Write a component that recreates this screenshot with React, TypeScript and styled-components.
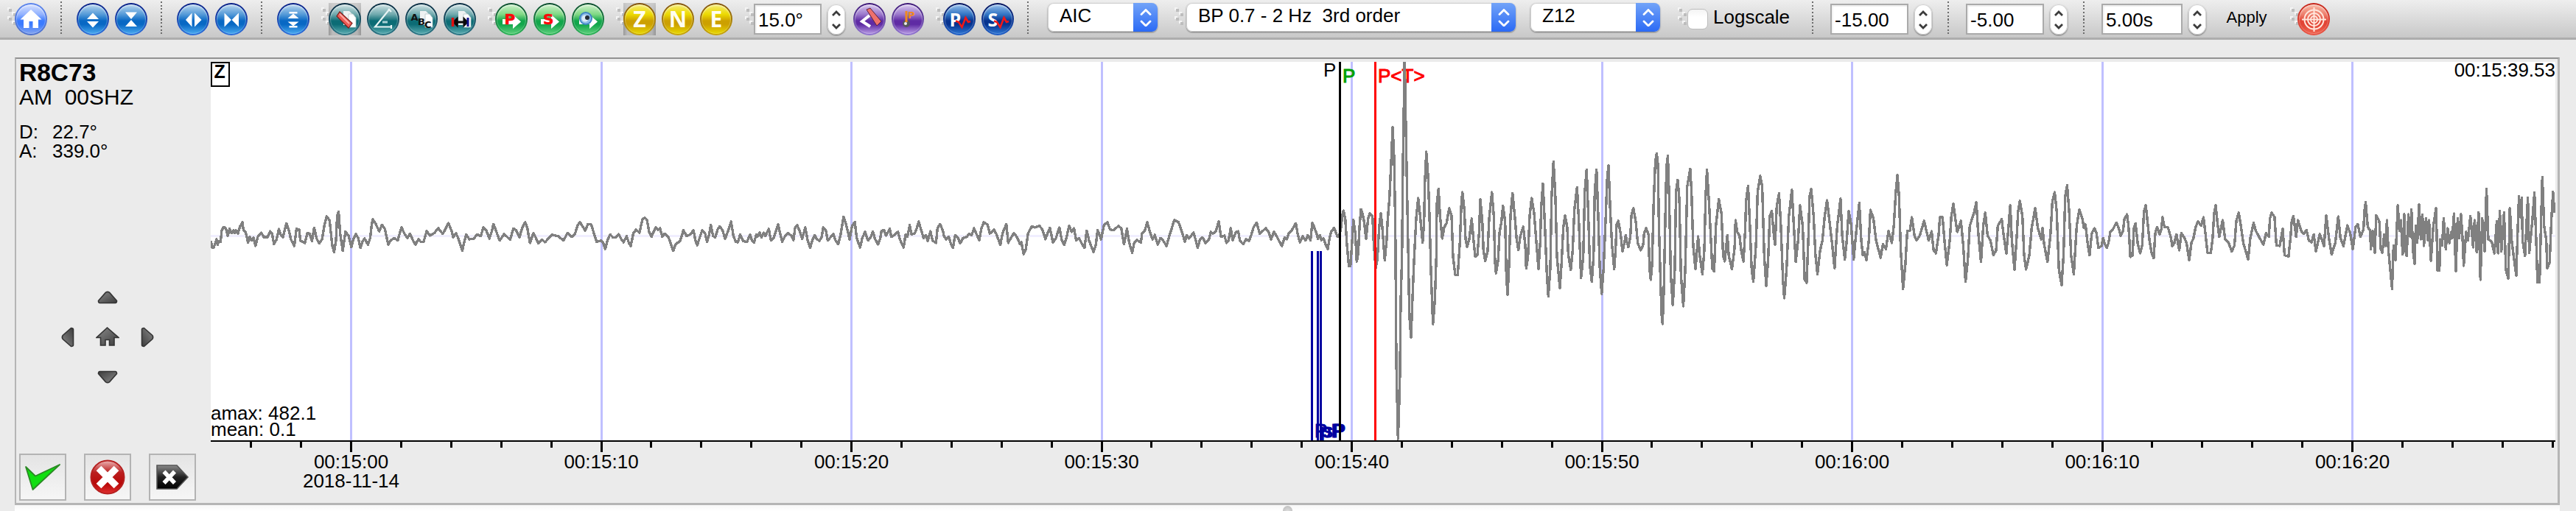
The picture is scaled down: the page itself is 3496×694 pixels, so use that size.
import React from 'react';
import styled, { createGlobalStyle, css } from 'styled-components';

const GlobalStyle = createGlobalStyle`
  * { box-sizing: border-box; }
  html, body { margin: 0; padding: 0; }
  body {
    width: 3496px;
    height: 694px;
    overflow: hidden;
    background: #ebebeb;
    color: #000;
    font-family: "Liberation Sans", Arial, Helvetica, sans-serif;
    font-size: 26px;
  }
`;

/* ---------- window and toolbar ---------- */

const Window = styled.div`
  display: flex;
  flex-direction: column;
  width: 3496px;
  height: 694px;
`;

const Toolbar = styled.header`
  display: flex;
  align-items: flex-start;
  height: 54px;
  padding-left: 10px;
  background: linear-gradient(#eeeeee, #c8c8c8);
  border-bottom: 3px solid #adadad;
`;

const ToolGroup = styled.div<{ $before?: number; $gap?: number }>`
  display: flex;
  align-items: flex-start;
  flex: none;
  gap: ${(p) => p.$gap ?? 8}px;
  margin-left: ${(p) => p.$before ?? 0}px;
`;

const Separator = styled.i<{ $before: number; $after: number }>`
  flex: none;
  width: 2px;
  height: 44px;
  margin: 2px ${(p) => p.$after}px 0 ${(p) => p.$before}px;
  background: repeating-linear-gradient(#6c6c6c 0 2px, transparent 2px 4.7px);
`;

const GripMark = styled.svg<{ $before?: number; $after?: number }>`
  flex: none;
  width: 10px;
  height: 24px;
  margin: 10px ${(p) => p.$after ?? 0}px 0 ${(p) => p.$before ?? 0}px;
  overflow: visible;
`;

const Grip = ({ before, after }: { before?: number; after?: number }) => (
  <GripMark $before={before} $after={after} viewBox="0 0 10 24">
    {[0, 6, 12, 18].map((y, i) => (
      <g key={y} transform={`translate(${i % 2 ? 6 : 0} ${y})`}>
        <rect width="4" height="4" fill="#f4f4f4" />
        <rect x="2" y="2" width="4" height="4" fill="#bdbdbd" />
      </g>
    ))}
  </GripMark>
);

const tones = {
  home: ['#5a84ee', '#4c70cc', '#d5e0ff', '#92b2ff', '#3b7bff', '#84a4ee'],
  blue: ['#061c84', '#2d70dc', '#b9d6ee', '#549ad8', '#0868c4', '#4aa9ef'],
  teal: ['#07293f', '#2a7686', '#cfe2e4', '#6fa9ad', '#0c6c75', '#5aabb0'],
  green: ['#07482a', '#2bb457', '#cdf0c9', '#7fd884', '#12a64b', '#5ccf7a'],
  yellow: ['#80500c', '#c9a708', '#f5ec72', '#ecd900', '#cca000', '#e8d800'],
  purple: ['#3a1474', '#9276d2', '#d7c6ee', '#9b78cc', '#5f2ba4', '#b79be4'],
  navy: ['#020f58', '#1f5fc8', '#93bdeb', '#3275c4', '#07338f', '#2c74d2'],
  red: ['#c52419', '#ea5646', '#f7b6a2', '#ee7f6d', '#e24435', '#ee6552'],
};
type Tone = keyof typeof tones;

const IconButton = styled.button<{ $pressed?: boolean }>`
  display: block;
  flex: none;
  width: 44px;
  height: 44px;
  margin: 4px 0 0;
  padding: 0;
  border: 0;
  background: none;
  ${(p) =>
    p.$pressed &&
    css`
      background: linear-gradient(rgba(210, 210, 210, 0.8), rgba(255, 255, 255, 0) 60%),
        linear-gradient(90deg, #989898, #bcbcbc 12%, #b4b4b4 88%, #969696);
    `}
`;

const Ball = styled.span<{ $tone: Tone }>`
  display: block;
  width: 44px;
  height: 44px;
  border: 2px solid transparent;
  border-radius: 50%;
  background: ${({ $tone }) => {
    const [ringTop, ringEnd, light, soft, deep, glow] = tones[$tone];
    return `linear-gradient(${light}, ${soft} 34%, ${deep} 56%, ${deep} 68%, ${glow}) padding-box,
      linear-gradient(${ringTop}, ${ringEnd}) border-box`;
  }};
  box-shadow: inset 0 2px 2px rgba(255, 255, 255, 0.35), inset 0 0 0 1px rgba(255, 255, 255, 0.18);
`;

const Glyph = styled.svg`
  display: block;
  width: 44px;
  height: 44px;
  margin: -2px;
`;

const Orb = ({ tone, pressed, children }: { tone: Tone; pressed?: boolean; children: React.ReactNode }) => (
  <IconButton $pressed={pressed}>
    <Ball $tone={tone}>
      <Glyph viewBox="0 0 44 44">{children}</Glyph>
    </Ball>
  </IconButton>
);

const Sheets = () => (
  <g>
    <path d="M20 11h8l4 4v15h-12z" fill="#eef1f2" />
    <path d="M27 15h6l4 5v13h-10z" fill="#fff" stroke="#b8c8ca" strokeWidth="0.8" />
  </g>
);

const ArrowRight = () => <path d="M10 22h14v-6l11 9.500-11 9.500v-6h-14z" fill="#fff" />;

/* ---------- form controls ---------- */

const SelectBox = styled.div<{ $width: number }>`
  display: flex;
  flex: none;
  width: ${(p) => p.$width}px;
  height: 39px;
  margin-top: 4px;
  background: #fff;
  border-radius: 8px;
  overflow: hidden;
  box-shadow: 0 1px 2px rgba(0, 0, 0, 0.45), inset 0 0 0 1px #cfcfcf;
`;

const SelectText = styled.span`
  flex: 1;
  padding-left: 16px;
  line-height: 35px;
  white-space: pre;
`;

const SelectCap = styled.span`
  display: flex;
  align-items: center;
  justify-content: center;
  width: 33px;
  background: linear-gradient(#72a3f8, #2b6af5);
`;

const Select = ({ width, label }: { width: number; label: string }) => (
  <SelectBox $width={width}>
    <SelectText>{label}</SelectText>
    <SelectCap>
      <svg width="16" height="24" viewBox="0 0 16 24" fill="none" stroke="#fff" strokeWidth="2.800" strokeLinecap="round">
        <path d="M2 7.500 8 1.500l6 6M2 17l6 6 6-6" />
      </svg>
    </SelectCap>
  </SelectBox>
);

const NumberField = styled.div<{ $width: number }>`
  flex: none;
  width: ${(p) => p.$width}px;
  height: 42px;
  margin-top: 5px;
  padding-left: 4px;
  background: #fff;
  border: 2px solid #aaa;
  box-shadow: inset 0 2px 0 #eee, inset 2px 0 0 #f4f4f4;
  line-height: 40px;
`;

const Stepper = styled.div`
  display: flex;
  align-items: center;
  justify-content: center;
  flex: none;
  width: 24px;
  height: 41px;
  margin-top: 6px;
  background: #fff;
  border-radius: 12px;
  box-shadow: 0 1px 2px rgba(0, 0, 0, 0.5), inset 0 0 0 1px #d2d2d2;
`;

const Spin = ({ width, value }: { width: number; value: string }) => (
  <ToolGroup $gap={8}>
    <NumberField $width={width}>{value}</NumberField>
    <Stepper>
      <svg width="12" height="26" viewBox="0 0 12 26" fill="none" stroke="#3c3c3c" strokeWidth="2.800">
        <path d="M1 7l5-5 5 5M1 19l5 5 5-5" />
      </svg>
    </Stepper>
  </ToolGroup>
);

const CheckBox = styled.span`
  flex: none;
  width: 28px;
  height: 28px;
  margin-top: 12px;
  background: linear-gradient(#f4f4f4, #fff 40%);
  border: 1.5px solid #bdbdbd;
  border-radius: 7px;
`;

const CheckLabel = styled.label`
  line-height: 30px;
  margin-top: 8px;
`;

const ApplyButton = styled.button`
  flex: none;
  margin: 11px 0 0 27px;
  padding: 0;
  width: 56px;
  border: 0;
  background: none;
  color: #000;
  font: 22px/26px "Liberation Sans", Arial, sans-serif;
  text-shadow: 0 1px 0 rgba(255, 255, 255, 0.5);
`;

/* ---------- station panel ---------- */

const StationPanel = styled.main`
  display: flex;
  width: 3454px;
  height: 608px;
  margin: 24px 0 0 20px;
  border-style: solid;
  border-width: 2px 3px 3px 2px;
  border-color: #929292 #b5b5b5 #b5b5b5 #b5b5b5;
`;

const StationInfo = styled.aside`
  display: flex;
  flex-direction: column;
  flex: none;
  width: 264px;
  padding: 3px 0 3px 4px;
`;

const StationCode = styled.h1`
  margin: 0;
  font-size: 33.5px;
  line-height: 32px;
`;

const Channel = styled.div`
  margin-top: 2px;
  font-size: 30px;
  line-height: 30px;
  white-space: pre;
`;

const Facts = styled.dl`
  display: grid;
  grid-template-columns: 45px auto;
  grid-auto-rows: 26px;
  margin: 19px 0 0;
  line-height: 26px;
`;

const Fact = styled.dd`
  margin: 0;
`;

const ArrowPad = styled.div`
  display: grid;
  grid-template-columns: 54px 54px 54px;
  grid-template-rows: 54px 54px 54px;
  place-items: center;
  margin: 159px 0 0 39px;
`;

const PadButton = styled.button<{ $area: string }>`
  grid-area: ${(p) => p.$area};
  display: flex;
  padding: 0;
  border: 0;
  background: none;
`;

const PadArrow = ({ area, turn }: { area: string; turn: number }) => (
  <PadButton $area={area}>
    <svg width="28" height="28" viewBox="-14 -14 28 28">
      <path
        transform={`rotate(${turn})`}
        d="M-12.500 4.500 -2.500 -6.800Q0-8.500 2.500-6.800L12.500 4.500Q12.500 7.500 10.500 7.500H-10.500Q-12.500 7.500-12.500 4.500z"
        fill="url(#pad)"
        stroke="#343434"
        strokeWidth="1.600"
      />
    </svg>
  </PadButton>
);

const Decisions = styled.div`
  display: flex;
  gap: 24px;
  margin-top: auto;
`;

const DecisionButton = styled.button`
  display: flex;
  align-items: center;
  justify-content: center;
  width: 64px;
  height: 64px;
  padding: 0;
  border: 2px solid #b3b3b3;
  background: linear-gradient(#e4e4e4, #f6f6f6);
`;

const PlotSvg = styled.svg`
  display: block;
  flex: none;
  width: 3182px;
  height: 599px;
  margin-top: 4px;
  font-size: 26px;
`;

const Splitter = styled.footer`
  display: flex;
  justify-content: center;
  width: 3454px;
  height: 8px;
  margin-left: 20px;
  overflow: hidden;
  background: linear-gradient(#f7f7f7, #fff);
`;

const SplitterKnob = styled.i`
  width: 13px;
  height: 13px;
  margin-top: 1px;
  border-radius: 50%;
  background: radial-gradient(circle at 50% 60%, #e2e2e2, #b4b4b4);
`;

/* ---------- trace data: x,y pairs with the scale of each record block ---------- */

type Block = { x0: number; y0: number; xRate: number; yRate: number; samples: string };

const blocks: Block[] = [
  {
    x0: 280, y0: 230, xRate: 1.96, yRate: 3,
    samples: `12,292 16,320 20,318 27,285 30,308 33,292 38,296 41,250 46,235 52,240 57,270 62,242 67,260 72,248 75,260 79,248 84,262 89,235 96,216 99,248 105,258 111,298 116,275 120,290 125,278 131,312 137,275 146,258 153,276 163,276 170,252 175,262 180,305 187,285 193,243 199,270 204,276 213,220 220,250 225,285 234,312 240,242 247,245 250,290 262,300 269,260 275,262 281,292 287,238 293,280 300,302 308,285 314,230 320,192 328,208 335,310 340,337 345,290 348,190 352,173 356,260 363,332 370,253 378,270 386,317 391,285 398,264 404,280 410,320 415,295 421,282 430,307 436,280 440,225 443,204 450,220 460,253 467,226 475,243 484,306 490,290 500,280 509,290 519,236 527,262 535,280 542,262 550,290 556,307 564,285 570,295 578,295 586,252 595,270 606,260 617,240 623,252 629,263 637,240 644,219 652,250 657,277 664,260 670,280 681,331 691,265 700,285 712,282 720,265 730,272 737,237 745,250 753,282 759,255 764,223 773,260 780,290 792,264 800,275 808,287 817,241 824,248 833,276 840,240 848,215 854,240 861,300 870,260 877,280 883,302 893,286 901,297 908,285 920,266 928,270 936,272 950,290 961,259 972,275 981,262 987,230 994,215 1002,235 1008,250 1015,223 1024,225 1032,265 1038,295 1050,290 1056,300 1061,325 1067,290 1074,265 1082,278 1090,277 1097,264 1104,285 1110,297 1118,272 1124,300 1129,313 1136,260 1143,246 1152,258 1160,205 1166,197 1172,205 1178,255 1184,275 1191,250 1196,236 1202,247 1207,240 1213,275 1219,262 1229,275 1236,305 1242,332 1248,305 1260,293 1264,275 1269,248 1278,272 1288,265 1296,248 1301,290 1306,309 1313,275 1319,248 1327,262 1332,295 1337,270 1342,226 1348,272 1354,277 1360,245 1366,232 1373,248 1380,283 1388,250 1396,213 1402,270 1408,295 1414,297 1420,265 1428,292 1438,296 1446,266 1452,292 1457,299 1463,265 1466,275 1472,258 1477,277 1483,258 1487,272 1496,242 1502,290 1510,277 1521,224 1526,260 1532,295 1540,270 1547,260 1556,270 1562,288 1566,240`,
  },
  {
    x0: 1080, y0: 230, xRate: 1.96, yRate: 3,
    samples: `0,235 4,228 10,250 17,283 25,236 31,285 38,320 44,290 50,268 55,282 63,292 69,275 73,236 80,248 85,290 93,276 100,264 106,290 113,305 120,260 127,193 134,225 138,250 143,285 150,230 157,214 162,280 171,318 177,280 184,255 192,290 200,275 205,253 211,285 219,306 225,280 228,250 235,248 240,270 250,242 254,275 262,268 272,254 277,285 287,318 292,265 297,275 303,227 308,265 316,262 322,240 327,213 334,250 340,280 346,268 351,292 358,252 364,290 373,300 377,240 384,223 391,250 395,275 400,285 407,275 412,300 418,320 424,268 432,280 437,302 445,280 455,275 461,262 468,268 474,240 480,262 488,288 494,240 500,216 510,225 516,262 527,246 534,265 544,308 550,260 560,223 565,300 572,280 580,260 588,275 596,303 600,297 606,345 612,325 618,260 628,232 636,237 648,230 656,245 664,285 670,260 676,238 684,298 692,280 701,237 708,290 714,308 720,280 727,230 734,255 740,240 746,290 753,280 760,300 768,320 774,250 780,290 792,337 798,310 803,248 812,285 820,225 829,216 836,245 845,248 858,231 866,240 873,305 881,242 887,300 895,340 900,300 907,288 911,292 918,298 921,262 928,250 935,216 942,255 949,285 955,267 963,307 970,280 978,292 986,312 994,270 1000,240 1007,206 1018,215 1026,250 1035,295 1040,268 1046,282 1058,257 1064,290 1069,320 1075,285 1082,277 1090,300 1099,285 1104,255 1110,262 1118,250 1125,211 1131,275 1140,270 1146,300 1151,290 1157,240 1162,288 1171,256 1177,252 1181,290 1190,305 1198,285 1206,292 1212,265 1218,235 1226,217 1234,262 1250,240 1258,255 1264,285 1272,254 1280,275 1285,290 1293,313 1300,278 1306,285 1311,262 1318,252 1330,220 1335,262 1341,297 1348,272 1356,290 1362,268 1369,290 1374,217 1380,240 1386,265 1389,283 1394,268 1398,288 1404,281 1409,305 1415,325 1420,280 1424,255 1432,238 1441,275 1447,262`,
  },
  {
    x0: 1740, y0: 70, xRate: 3, yRate: 2.513,
    samples: `240,600 245,560 250,543 257,570 264,660 272,733 278,733 285,650 290,575 298,620 304,717 310,690 315,600 321,538 328,555 334,580 342,640 350,570 357,552 368,562 373,650 381,740 388,710 395,600 402,552 408,600 418,712 426,640 430,575 437,500 444,380 450,258 456,360 461,600 465,1060 472,1322 479,1140 483,850 488,700 492,380 499,20 506,360 514,700 518,900 525,975 532,820 538,700 546,570 554,500 562,560 572,652 578,580 581,450 587,342 594,420 600,560 606,750 614,930 622,850 628,700 630,520 637,468 643,560 652,638 660,600 670,585 680,535 690,560 696,700 705,763 715,763 724,650 730,520 734,480 742,540 747,640 753,667 762,640 772,570 779,640 786,700 795,695 802,620 807,505 815,580 820,680 827,715 837,680 843,570 854,480 862,560 867,720 871,757 880,710 885,620 893,580 899,527 908,580 913,760 918,830 924,730 930,560 938,483 947,560 955,640 962,677 970,630 982,598 990,660 994,740 1001,700 1008,560 1016,500 1026,550 1034,640 1044,742 1051,650 1055,530 1062,450 1070,600 1078,760 1084,835 1092,740 1097,500 1105,375 1113,500 1119,700 1131,808 1138,720 1145,600 1152,560 1161,600 1165,690 1175,745 1183,680 1190,540 1201,463 1208,580 1217,772 1226,700 1232,480 1240,403 1246,540 1253,730 1261,785 1268,700 1273,480 1280,403 1287,560 1293,730 1301,827 1309,740 1318,560 1323,440 1329,388 1336,540 1343,660 1352,743 1358,670 1362,590 1369,578 1378,620 1386,683 1394,650 1399,627 1404,650 1410,668 1418,630 1422,560 1430,535 1440,580 1448,655 1460,678 1470,660 1474,620 1482,603 1492,625 1496,740`,
  },
  {
    x0: 2180, y0: 180, xRate: 2.24, yRate: 3,
    samples: `135,600 139,540 144,280 149,120 153,85 157,130 160,380 165,620 168,740 171,780 175,640 180,300 183,140 187,95 191,260 196,580 202,703 208,560 212,240 217,193 222,270 227,580 234,708 240,560 246,220 255,148 259,240 264,460 271,557 279,423 284,500 292,577 298,480 302,260 306,152 312,280 318,440 322,555 328,565 333,380 342,272 350,330 355,500 360,525 368,418 372,500 382,557 390,470 393,357 398,405 405,420 410,480 417,525 422,400 425,280 431,217 436,360 442,560 447,607 455,460 460,240 468,177 474,220 480,500 486,625 492,520 497,340 503,320 508,400 513,457 518,300 525,248 530,360 537,600 541,675 548,560 555,340 564,233 570,380 576,527 583,440 589,297 597,380 603,600 609,612 614,440 618,260 623,230 630,340 636,500 642,577 650,480 657,440 664,340 671,276 680,380 687,460 694,553 702,380 712,270 717,420 725,517 731,440 737,320 744,370 752,517 760,400 769,287 775,440 780,500 785,488 791,520 798,440 803,315 812,350 820,440 827,475 834,510 841,455 850,475 858,402 868,450 874,380 880,240 885,173 890,260 895,480 902,637 909,540 915,400 923,400 929,345 937,420 943,440 953,420 966,360 973,400 980,440 989,402 995,480 1002,492 1010,420 1014,345 1022,345 1028,440 1035,540 1044,440 1049,340 1055,290 1062,360 1067,405 1078,360 1085,460 1092,608 1099,520 1105,380 1117,330 1125,284 1130,400 1139,527 1146,380 1152,327 1159,420 1168,440 1177,500 1185,480 1190,380 1202,353 1208,420 1216,493 1223,380 1228,297 1233,440 1241,560 1248,420 1252,320 1257,278 1265,340 1270,500 1276,558 1286,500 1293,390 1304,308 1312,390 1322,435 1326,390 1331,455 1341,527 1350,420 1356,280 1363,243 1369,320 1376,560 1384,622 1390,500 1395,260 1401,215 1407,320 1413,500 1421,577 1430,380 1438,313 1447,350 1452,388 1457,375 1462,440 1469,500 1476,410 1484,390 1490,410 1496,470 1505,462`,
  },
  {
    x0: 2850, y0: 180, xRate: 2.427, yRate: 3,
    samples: `5,460 10,430 16,455 22,470 28,450 34,405 42,395 54,367 62,390 68,420 76,400 80,355 89,333 94,380 100,507 107,500 112,390 117,370 124,450 132,492 139,460 145,320 151,296 157,370 163,440 170,490 177,512 182,410 188,385 196,415 202,395 206,345 212,385 224,387 234,430 238,463 245,450 252,415 261,480 268,410 278,428 285,450 294,520 301,450 308,430 315,385 323,362 333,380 341,345 348,420 354,490 365,490 371,430 376,330 381,296 387,370 393,425 404,357 412,435 424,450 434,485 443,460 449,360 457,326 464,380 472,450 488,517 495,430 506,368 513,400 524,425 538,457 547,410 556,425 560,350 565,326 575,345 581,460 592,462 602,393 608,500 621,505 628,420 631,365 637,340 646,425 652,357 664,405 672,413 680,397 688,440 697,448 704,415 711,485 724,413 738,462 745,338 754,430 763,497 775,450 785,342 792,430 802,463 815,378 824,410 833,475 842,385 849,373 858,425 868,395 871,320 875,284 882,385 890,400 892,475 898,400 905,490 910,337 920,362 925,475 930,490 936,415 941,462 945,357 950,480 955,545 962,637 967,460 973,520 981,296 986,400 991,357 997,497 1002,333 1006,480 1010,503 1016,333 1022,425 1026,314 1031,480 1036,535 1040,380 1045,448 1051,293 1057,435 1062,335 1067,462 1074,350 1080,440 1084,357 1090,522 1098,380 1107,308 1112,563 1118,563 1120,435 1127,460 1132,350 1139,475 1145,390 1151,450 1157,405 1160,430 1166,330 1172,565 1178,350 1183,430 1189,333 1194,430 1198,543 1206,405 1212,440 1220,340 1229,468 1234,357 1241,488 1247,326 1253,600 1259,350 1267,485 1273,230 1279,435 1290,445 1299,492 1307,362 1311,492 1317,320 1322,485 1331,326 1337,560 1345,595 1350,308 1356,440 1362,500 1371,583 1376,390 1380,260 1385,345 1389,266 1392,440 1400,503 1409,266 1414,490 1424,360 1431,245 1437,450 1441,610 1448,610 1453,350 1457,182 1463,380 1470,440 1473,553 1481,530 1487,350 1492,242 1497,328`,
  },
];

const tracePoints = blocks
  .map(({ x0, y0, xRate, yRate, samples }) =>
    samples
      .split(' ')
      .map((pair) => {
        const [x, y] = pair.split(',').map(Number);
        return `${(x / xRate + x0).toFixed(1)},${(y / yRate + y0).toFixed(1)}`;
      })
      .join(' '),
  )
  .join(' ');

const LEFT = 286;
const RIGHT = 3468;
const TOP = 84;
const AXIS = 598;
const SECOND = 33.95;
const ORIGIN = 476.5;

const majors = ['00:15:00', '00:15:10', '00:15:20', '00:15:30', '00:15:40', '00:15:50', '00:16:00', '00:16:10', '00:16:20'];
const minors = Array.from({ length: 47 }, (_, i) => ORIGIN + (i - 2) * 2 * SECOND).filter((x) => x > LEFT && x < RIGHT);

const Plot = () => (
  <PlotSvg viewBox="286 84 3182 599">
    <defs>
      <clipPath id="canvas">
        <rect x={LEFT} y={TOP} width={RIGHT - LEFT} height={AXIS - TOP} />
      </clipPath>
    </defs>
    <rect x={LEFT} y={TOP} width={RIGHT - LEFT} height={AXIS - TOP} fill="#fff" />
    <rect x={LEFT} y="319" width={RIGHT - LEFT} height="3" fill="#f0eeff" />
    {majors.map((t, i) => (
      <rect key={t} x={Math.round(ORIGIN + i * 10 * SECOND - 1.5)} y={TOP} width="3" height={AXIS - TOP} fill="#c0c0ff" />
    ))}
    <g strokeWidth="1">
      <text x="1822" y="112" fill="#00a000" stroke="#00a000">P</text>
      <text x="1870" y="112" fill="#ff0000" stroke="#ff0000">{'P<T>'}</text>
    </g>
    <polyline
      points={tracePoints}
      clipPath="url(#canvas)"
      fill="none"
      stroke="#808080"
      strokeWidth="3.4"
      strokeLinejoin="round"
      shapeRendering="crispEdges"
    />
    {[1779, 1787, 1791].map((x) => (
      <rect key={x} x={x} y="341" width="3" height={AXIS - 341} fill="#0000a0" />
    ))}
    <g fill="#0000a0" stroke="#0000a0" strokeWidth="1" clipPath="url(#canvas)">
      <text x="1784" y="593.500">P</text>
      <text x="1792" y="593.500">pP</text>
      <text x="1796" y="593.500">sP</text>
    </g>
    <rect x="1817" y={TOP} width="3" height={AXIS - TOP} fill="#000" />
    <rect x="1865" y={TOP} width="3" height={AXIS - TOP} fill="#f00" />
    <text x="1796" y="103.500">P</text>
    <text x={RIGHT} y="104" textAnchor="end">00:15:39.53</text>
    <rect x="287" y="85" width="24" height="32" fill="#fff" stroke="#000" strokeWidth="2" />
    <text x="290.500" y="106" fontSize="25" fontWeight="700">Z</text>
    <text x="286" y="569.500">amax: 482.1</text>
    <text x="286" y="592">mean: 0.1</text>

    <rect x={LEFT} y={AXIS} width={RIGHT - LEFT} height="2" />
    {minors.map((x) => (
      <rect key={x} x={Math.round(x - 1.5)} y={AXIS} width="3" height="10" />
    ))}
    {majors.map((t, i) => (
      <g key={t}>
        <rect x={Math.round(ORIGIN + i * 10 * SECOND - 1.5)} y={AXIS} width="3" height="16" />
        <text x={ORIGIN + i * 10 * SECOND} y="636" textAnchor="middle">
          {t}
        </text>
      </g>
    ))}
    <text x={ORIGIN} y="662" textAnchor="middle">
      2018-11-14
    </text>
  </PlotSvg>
);

/* ---------- toolbar contents ---------- */

const letterFont = '"Open Sans", sans-serif';
const boldFont = '"DejaVu Sans", sans-serif';

const ToolbarContents = () => (
  <Toolbar>
    <Grip />
    <Orb tone="home">
      <path d="M22 9 7.500 22.500H12V34h7.500v-9h5v9H32V22.500h4.500z" fill="#fff" />
    </Orb>
    <Separator $before={18} $after={20} />
    <ToolGroup>
      <Orb tone="blue">
        <path d="M22 13.500 30 22H14zM22 33.500 30 25H14z" fill="#fff" />
      </Orb>
      <Orb tone="blue">
        <path d="M22 22 30 12.500H14zM22 23 30 32H14z" fill="#fff" />
      </Orb>
    </ToolGroup>
    <Separator $before={18} $after={20} />
    <ToolGroup>
      <Orb tone="blue">
        <path d="M12 23 20.500 13.500v19zM33.500 23 24 13.500v19z" fill="#fff" />
      </Orb>
      <Orb tone="blue">
        <path d="M22 23 12.500 13.500v19zM22.500 23 32 13.500v19z" fill="#fff" />
      </Orb>
    </ToolGroup>
    <Separator $before={18} $after={20} />
    <Orb tone="blue">
      <path d="M22 14.500 29.500 21h-15zM22 31.500 29.500 25.500h-15zM16.500 12h11v2.500h-11zM16.500 31h11v2.500h-11z" fill="#fff" />
    </Orb>

    <Grip before={16} />
    <ToolGroup>
      <Orb tone="teal" pressed>
        <Sheets />
        <path d="M15 12 32 27.500 27 34 11 18z" fill="#ee5d56" stroke="#7a1f1c" strokeWidth="1.200" />
        <path d="M15 15 28 28" stroke="#ffaaa4" strokeWidth="2" />
      </Orb>
      <Orb tone="teal">
        <path d="M31 8 11 32.500H33M33 30v5M29 8l4 4" fill="none" stroke="#e8f4f4" strokeWidth="2.200" />
        <path d="M21 26h7" stroke="#a8d0d4" strokeWidth="3" />
      </Orb>
      <Orb tone="teal">
        <Sheets />
        <g fontFamily={boldFont} fontWeight="700" fontSize="13" fill="#111">
          <text x="7.500" y="24">A</text>
          <text x="17" y="29.500">B</text>
          <text x="26" y="34">C</text>
        </g>
      </Orb>
      <Orb tone="teal">
        <Sheets />
        <path d="M14 26h16M18 22l-4 4 4 4zM28 22l4 4-4 4z" stroke="#0a0a0a" strokeWidth="3" />
        <path d="M12.500 20v12" stroke="#e01010" strokeWidth="3.500" />
        <path d="M33 20v12" stroke="#10108c" strokeWidth="3" />
      </Orb>
    </ToolGroup>

    <Grip before={16} />
    <ToolGroup>
      <Orb tone="green">
        <ArrowRight />
        <text x="12.500" y="28.500" fontFamily={boldFont} fontWeight="700" fontSize="20" fill="#fb0a0a" stroke="#fb0a0a" strokeWidth="0.6">P</text>
      </Orb>
      <Orb tone="green">
        <ArrowRight />
        <text x="13" y="28.500" fontFamily={boldFont} fontWeight="700" fontSize="20" fill="#fb0a0a" stroke="#fb0a0a" strokeWidth="0.6">S</text>
      </Orb>
      <Orb tone="green">
        <ArrowRight />
        <circle cx="19" cy="21" r="8" fill="#8fbce8" stroke="#3f86c4" strokeWidth="2" />
        <circle cx="18" cy="21" r="4.500" fill="#dcecf8" />
        <circle cx="21" cy="20" r="3" fill="#222c38" />
      </Orb>
    </ToolGroup>

    <Grip before={16} />
    <ToolGroup>
      {['Z', 'N', 'E'].map((c) => (
        <Orb key={c} tone="yellow" pressed={c === 'Z'}>
          <text x="22" y="33" textAnchor="middle" fontFamily={letterFont} fontWeight="700" fontSize="30" fill="#fffef0">
            {c}
          </text>
        </Orb>
      ))}
    </ToolGroup>

    <Grip before={17} after={2} />
    <Spin width={92} value="15.0°" />
    <ToolGroup $before={11}>
      <Orb tone="purple">
        <path d="M22 17 12 25l11 7" fill="none" stroke="#fff" strokeWidth="4" />
        <path d="M18 9 23 7 38 25l-6 6z" fill="#ee706c" stroke="#5c2540" strokeWidth="1" />
      </Orb>
      <Orb tone="purple">
        <circle cx="20" cy="28" r="5" fill="#55555e" />
        <circle cx="19" cy="28" r="2" fill="#eee" />
        <path d="M20 26V11" stroke="#f08a20" strokeWidth="3" />
        <text x="22" y="21" fontFamily={boldFont} fontWeight="700" fontSize="13" fill="#f08a20">P</text>
      </Orb>
    </ToolGroup>
    <Grip before={16} />
    <ToolGroup>
      {['P', 'S'].map((c) => (
        <Orb key={c} tone="navy">
          <text x="8.500" y="32" fontFamily={letterFont} fontWeight="700" fontSize="25" fill="#fff">{c}</text>
          <path d="M17 24.500 21 26 25.500 33 30.500 20 34 26 37 25" fill="none" stroke="#f01818" strokeWidth="2.600" />
        </Orb>
      ))}
    </ToolGroup>

    <Separator $before={18} $after={26} />
    <Select width={149} label="AIC" />
    <Grip before={23} after={6} />
    <ToolGroup $gap={20}>
      <Select width={447} label="BP 0.7 - 2 Hz  3rd order" />
      <Select width={176} label="Z12" />
    </ToolGroup>
    <Grip before={24} after={3} />
    <ToolGroup $gap={7}>
      <CheckBox />
      <CheckLabel>Logscale</CheckLabel>
    </ToolGroup>
    <Separator $before={30} $after={23} />
    <Spin width={106} value="-15.00" />
    <Separator $before={21} $after={23} />
    <Spin width={106} value="-5.00" />
    <Separator $before={21} $after={23} />
    <Spin width={110} value="5.00s" />
    <ApplyButton>Apply</ApplyButton>
    <Grip before={31} />
    <Orb tone="red">
      <g fill="none" stroke="#ffe6dc" strokeWidth="2">
        <circle cx="22.500" cy="22.500" r="4.500" />
        <circle cx="22.500" cy="22.500" r="8.500" />
        <circle cx="22.500" cy="22.500" r="13" />
        <path d="M22.500 6v33M6 22.500h33" />
      </g>
    </Orb>
  </Toolbar>
);

const Sidebar = () => (
  <StationInfo>
    <StationCode>R8C73</StationCode>
    <Channel>AM  00SHZ</Channel>
    <Facts>
      <dt>D:</dt>
      <Fact>22.7°</Fact>
      <dt>A:</dt>
      <Fact>339.0°</Fact>
    </Facts>
    <ArrowPad>
      <PadArrow area="1 / 2" turn={0} />
      <PadArrow area="2 / 1" turn={-90} />
      <PadButton $area="2 / 2">
        <svg width="32" height="30" viewBox="0 0 32 30">
          <defs>
            <linearGradient id="pad" x1="0" y1="0" x2="1" y2="1">
              <stop offset="0" stopColor="#8a8a8a" />
              <stop offset="1" stopColor="#3c3c3c" />
            </linearGradient>
          </defs>
          <path d="M15.500 2 1 15.500h5.500V26H13v-7.500h5.500V26H25V15.500h6z" fill="url(#pad)" stroke="#343434" strokeWidth="1.600" />
        </svg>
      </PadButton>
      <PadArrow area="2 / 3" turn={90} />
      <PadArrow area="3 / 2" turn={180} />
    </ArrowPad>
    <Decisions>
      <DecisionButton>
        <svg width="50" height="38" viewBox="0 0 50 38">
          <path d="M2 5 15 17.500 48 2 11.500 36z" fill="#10df10" stroke="#2b8a24" strokeWidth="1.800" strokeLinejoin="round" />
        </svg>
      </DecisionButton>
      <DecisionButton>
        <svg width="50" height="50" viewBox="0 0 50 50">
          <defs>
            <linearGradient id="stop" x1="0" y1="0" x2="0" y2="1">
              <stop offset="0" stopColor="#ecb4b4" />
              <stop offset="0.350" stopColor="#bb2020" />
              <stop offset="0.700" stopColor="#b80808" />
              <stop offset="1" stopColor="#e03030" />
            </linearGradient>
          </defs>
          <circle cx="25" cy="25" r="22.500" fill="url(#stop)" stroke="#b52020" strokeWidth="2" />
          <path d="M13 13 37 37M37 13 13 37" stroke="#fff" strokeWidth="9.500" />
        </svg>
      </DecisionButton>
      <DecisionButton>
        <svg width="46" height="36" viewBox="0 0 46 36">
          <defs>
            <linearGradient id="skip" x1="0" y1="0" x2="0" y2="1">
              <stop offset="0" stopColor="#8a8a8a" />
              <stop offset="0.500" stopColor="#222" />
              <stop offset="1" stopColor="#000" />
            </linearGradient>
          </defs>
          <path d="M2 2h27l15 16-15 16H2z" fill="url(#skip)" stroke="#555" strokeWidth="1.600" />
          <path d="M11.500 10.500 26 26M26 10.500 11.500 26" stroke="#fff" strokeWidth="5.500" />
        </svg>
      </DecisionButton>
    </Decisions>
  </StationInfo>
);

export default function App() {
  return (
    <Window>
      <GlobalStyle />
      <ToolbarContents />
      <StationPanel>
        <Sidebar />
        <Plot />
      </StationPanel>
      <Splitter>
        <SplitterKnob />
      </Splitter>
    </Window>
  );
}
